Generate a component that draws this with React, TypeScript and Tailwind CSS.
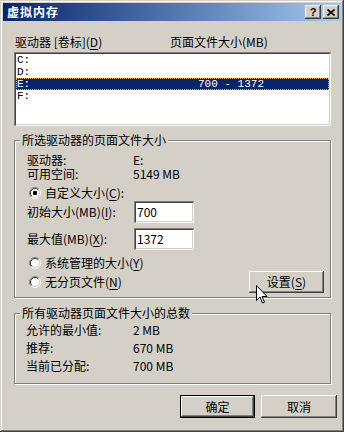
import React from "react";

// classic win2000 bevels
const raised =
  "shadow-[inset_-1px_-1px_#404040,inset_1px_1px_#ffffff,inset_-2px_-2px_#808080,inset_2px_2px_#d4d0c8]";
const sunken =
  "shadow-[inset_1px_1px_#808080,inset_-1px_-1px_#ffffff,inset_2px_2px_#404040,inset_-2px_-2px_#d4d0c8]";
const etched =
  "border border-[#808080] shadow-[1px_1px_0_#ffffff,inset_1px_1px_0_#ffffff]";

function Radio({ checked }: { checked?: boolean }) {
  return (
    <svg width="12" height="12" viewBox="0 0 12 12" className="shrink-0">
      <circle cx="6" cy="6" r="4.5" fill="#ffffff" />
      <path d="M2.1 9.9 A5.5 5.5 0 0 1 9.9 2.1" stroke="#808080" fill="none" />
      <path d="M9.9 2.1 A5.5 5.5 0 0 1 2.1 9.9" stroke="#ffffff" fill="none" />
      <path d="M2.8 9.2 A4.5 4.5 0 0 1 9.2 2.8" stroke="#404040" fill="none" />
      <path d="M9.2 2.8 A4.5 4.5 0 0 1 2.8 9.2" stroke="#d4d0c8" fill="none" />
      {checked && <rect x="4" y="4" width="4" height="4" rx="1.2" fill="#000000" />}
    </svg>
  );
}

function U({ c }: { c: string }) {
  return <span className="underline underline-offset-2">{c}</span>;
}

const drives = [
  { d: "C:", size: "" },
  { d: "D:", size: "" },
  { d: "E:", size: "700 - 1372" },
  { d: "F:", size: "" },
];

export default function App() {
  return (
    <div className="relative w-[344px] h-[432px] bg-[#d4d0c8] p-[3px] text-[12px] text-black font-['Noto_Sans_CJK_SC','Noto_Sans',sans-serif] shadow-[inset_-1px_-1px_#404040,inset_1px_1px_#d4d0c8,inset_-2px_-2px_#808080,inset_2px_2px_#ffffff] select-none">
      {/* title bar */}
      <div className="flex h-[18px] items-center justify-between bg-gradient-to-r from-[#0a246a] to-[#a6caf0] pl-[4px] pr-[2px]">
        <span className="font-bold text-white text-[12px] leading-none tracking-[1px]">虚拟内存</span>
        <div className="flex gap-[1px]">
          <div className={`flex h-[14px] w-[16px] items-center justify-center bg-[#d4d0c8] ${raised}`}>
            <span className="font-['Liberation_Sans',sans-serif] text-[11px] font-bold leading-none">?</span>
          </div>
          <div className={`ml-[1px] flex h-[14px] w-[16px] items-center justify-center bg-[#d4d0c8] ${raised}`}>
            <svg width="8" height="7" viewBox="0 0 8 7">
              <path d="M0.5 0.5 L7.5 6.5 M7.5 0.5 L0.5 6.5" stroke="#000" strokeWidth="1.6" />
            </svg>
          </div>
        </div>
      </div>

      {/* list header */}
      <div className="mt-[15px] flex h-[12px] items-center pl-[12px] leading-[12px]">
        <span className="w-[155px]">
          驱动器 [卷标](<U c="D" />)
        </span>
        <span>页面文件大小(MB)</span>
      </div>

      {/* list box */}
      <div className={`mt-[4px] ml-[11px] mr-[10px] h-[74px] bg-white p-[2px] ${sunken}`}>
        {drives.map((r) => (
          <div
            key={r.d}
            className={`flex h-[12px] items-center pl-[1px] font-['Liberation_Mono',monospace] text-[11px] leading-[12px] ${
              r.size ? "bg-[#0a246a] text-white outline outline-1 outline-dotted outline-[#f0c060] -outline-offset-1" : ""
            }`}
          >
            <span className="w-[181px]">{r.d}</span>
            <span>{r.size}</span>
          </div>
        ))}
      </div>

      {/* selected drive group */}
      <div className={`mt-[14px] ml-[11px] mr-[10px] flex flex-col pb-[4px] ${etched}`}>
        <span className="-mt-[8px] ml-[5px] self-start bg-[#d4d0c8] px-[2px] leading-[14px]">所选驱动器的页面文件大小</span>
        <div className="mt-[6px] flex flex-col pl-[12px] pr-[6px]">
          <div className="flex leading-[14px] whitespace-pre-line">
            <span className="w-[106px]">{"驱动器:\n可用空间:"}</span>
            <span>{"E:\n5149 MB"}</span>
          </div>
          <div className="mt-[5px] flex h-[14px] items-center gap-[4px] pl-[2px]">
            <Radio checked />
            <span>
              自定义大小(<U c="C" />):
            </span>
          </div>
          <div className="mt-[1px] flex h-[22px] items-center">
            <span className="w-[107px]">
              初始大小(MB)(<U c="I" />):
            </span>
            <div className={`flex h-[22px] w-[60px] items-center bg-white pl-[3px] ${sunken}`}>700</div>
          </div>
          <div className="mt-[5px] flex h-[22px] items-center">
            <span className="w-[107px]">
              最大值(MB)(<U c="X" />):
            </span>
            <div className={`flex h-[22px] w-[60px] items-center bg-white pl-[3px] ${sunken}`}>1372</div>
          </div>
          <div className="mt-[6px] flex h-[14px] items-center gap-[4px] pl-[2px]">
            <Radio />
            <span>
              系统管理的大小(<U c="Y" />)
            </span>
          </div>
          <div className="mt-[1px] flex h-[22px] items-center justify-between">
            <div className="flex items-center gap-[4px] pl-[2px]">
              <Radio />
              <span>
                无分页文件(<U c="N" />)
              </span>
            </div>
            <div className={`flex h-[22px] w-[75px] items-center justify-center bg-[#d4d0c8] ${raised}`}>
              设置(<U c="S" />)
            </div>
          </div>
        </div>
      </div>

      {/* totals group */}
      <div className={`mt-[15px] ml-[11px] mr-[10px] flex flex-col pb-[8px] ${etched}`}>
        <span className="-mt-[8px] ml-[5px] self-start bg-[#d4d0c8] px-[2px] leading-[14px]">所有驱动器页面文件大小的总数</span>
        <div className="mt-[1px] flex flex-col pl-[11px]">
          <div className="flex h-[18px] items-center">
            <span className="w-[107px]">允许的最小值:</span>
            <span>2 MB</span>
          </div>
          <div className="flex h-[18px] items-center">
            <span className="w-[107px]">推荐:</span>
            <span>670 MB</span>
          </div>
          <div className="flex h-[18px] items-center">
            <span className="w-[107px]">当前已分配:</span>
            <span>700 MB</span>
          </div>
        </div>
      </div>

      {/* dialog buttons */}
      <div className="mt-[11px] flex justify-end gap-[6px] pr-[4px]">
        <div className={`flex h-[23px] w-[75px] items-center justify-center border border-black bg-[#d4d0c8] ${raised}`}>
          确定
        </div>
        <div className={`flex h-[23px] w-[76px] items-center justify-center bg-[#d4d0c8] ${raised}`}>取消</div>
      </div>

      {/* mouse pointer over the 设置 button */}
      <svg
        width="12"
        height="19"
        viewBox="0 0 12 19"
        className="absolute left-[256px] top-[285px]"
      >
        <path
          d="M0.5 0.5 L0.5 15.5 L4 12 L6.5 18 L8.5 17.2 L6 11.5 L11 11.5 Z"
          fill="#ffffff"
          stroke="#000000"
          strokeWidth="1"
          strokeLinejoin="miter"
        />
      </svg>
    </div>
  );
}
